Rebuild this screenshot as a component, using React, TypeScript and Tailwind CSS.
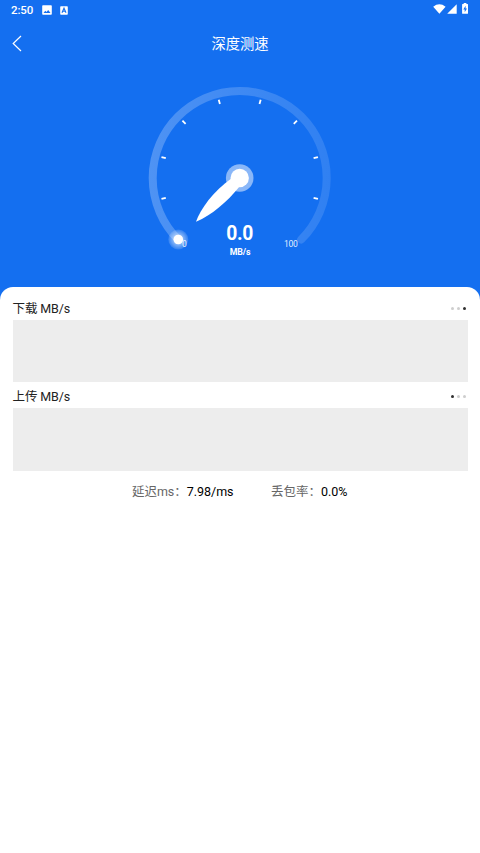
import React from "react";

const TICKS = [165, 195, 225, 255, 285, 315, 345, 375];

function StatusBar() {
  return (
    <div className="flex h-5 items-center justify-between pl-[11px] pr-[11px]">
      <div className="flex items-center">
        <span className="w-[31px] text-[11.5px] leading-5 font-medium tracking-[-0.1px]">2:50</span>
        <svg className="block" width="10" height="10" viewBox="0 0 10 10">
          <path fillRule="evenodd" fill="#fff" d="M1 .3h8a.8.8 0 0 1 .8.8v7.8a.8.8 0 0 1-.8.8H1a.8.8 0 0 1-.8-.8V1.100A.8.8 0 0 1 1 .3ZM1.500 8h7L6.200 5 4.500 7.100 3.300 5.800Z" />
        </svg>
        <svg className="ml-2 block" width="8" height="9" viewBox="0 0 8 9">
          <rect x=".2" y=".3" width="7.600" height="8.400" rx=".8" fill="#fff" />
          <path d="M2 6.800 4 2.200 6 6.800M2.800 5.300h2.400" fill="none" stroke="#146ff0" strokeWidth="1.100" />
        </svg>
      </div>
      <svg className="-mt-0.5 block" width="36" height="12" viewBox="433 3 36 12">
        <path fill="#fff" d="M433.200 6.700Q439.400 1.800 445.600 6.700L439.400 13.800ZM447.200 13.700 456.700 4.300V13.700ZM463.700 4v-.9h2.700V4h1.100q.5 0 .5.500v8.700q0 .6-.6.600h-4.700q-.6 0-.6-.6V4.500q0-.5.500-.5Z" />
        <path fill="#146ff0" d="M465.600 5.700 463.300 9.500H464.700V12.200L467 8.400H465.600Z" />
      </svg>
    </div>
  );
}

function Gauge() {
  return (
    <svg className="mx-auto block" width="200" height="190" viewBox="140 80 200 190">
      <defs>
        <linearGradient id="track" x1="149" x2="331" y1="0" y2="0" gradientUnits="userSpaceOnUse">
          <stop offset="0" stopColor="#fff" stopOpacity=".25" />
          <stop offset="1" stopColor="#fff" stopOpacity=".12" />
        </linearGradient>
        <radialGradient id="glow">
          <stop offset=".4" stopColor="#fff" stopOpacity=".55" />
          <stop offset="1" stopColor="#fff" stopOpacity=".12" />
        </radialGradient>
      </defs>
      <path d="M178.200 239.500A87 87 0 1 1 301.200 239.500" fill="none" stroke="url(#track)" strokeWidth="8" strokeLinecap="round" />
      {TICKS.map((angle) => (
        <line key={angle} x1="76.500" x2="81" y1="0" y2="0" stroke="#fff" strokeWidth="1.800" transform={`translate(239.700 178) rotate(${angle})`} />
      ))}
      <circle cx="239.700" cy="178" r="13.800" fill="#fff" fillOpacity=".5" />
      <path d="M196 221.800C200 210 213 191 232 178L240 186C227 202 212 215 196 221.800Z" fill="#fff" />
      <circle cx="239.700" cy="178" r="9.200" fill="#fff" />
      <circle cx="178.300" cy="239.500" r="10" fill="url(#glow)" />
      <circle cx="178.300" cy="239.500" r="4.800" fill="#fff" />
      <text x="182" y="246.700" fill="#fff" fillOpacity=".9" fontSize="8.500">0</text>
      <text x="284" y="246.700" fill="#fff" fillOpacity=".9" fontSize="8.500" letterSpacing="-.3">100</text>
      <text x="239.700" y="240.300" fill="#fff" fontSize="19.300" fontWeight="700" letterSpacing="-.3" textAnchor="middle">0.0</text>
      <text x="240" y="254.700" fill="#fff" fontSize="8.800" fontWeight="700" letterSpacing="-.15" textAnchor="middle">MB/s</text>
    </svg>
  );
}

function Dots({ active }: { active: number }) {
  return (
    <div className="flex gap-[3px] pr-0.5">
      {[0, 1, 2].map((i) => (
        <span key={i} className={`size-[3px] rounded-full ${i === active ? "bg-[#303030]" : "bg-[#cecece]"}`} />
      ))}
    </div>
  );
}

function SpeedPanel({ title, active, chart }: { title: string; active: number; chart: string }) {
  return (
    <section>
      <div className="flex h-[26px] items-center justify-between pt-[3px] text-[12.5px] tracking-[-0.1px] text-[#222]">
        <h2 className="pt-[2px]">{title}</h2>
        <Dots active={active} />
      </div>
      <div className={`bg-[#ededed] ${chart}`} />
    </section>
  );
}

export default function App() {
  return (
    <div className="flex h-[853px] w-[480px] flex-col overflow-hidden bg-[#146ff0] font-[Roboto,'Noto_Sans_CJK_SC',sans-serif]">
      <header className="h-[287px] text-white">
        <StatusBar />
        <div className="grid h-[47px] grid-cols-[40px_1fr_40px] items-center">
          <svg className="ml-[12px] block" width="10" height="18" viewBox="0 0 10 18">
            <path d="M9 1 1.200 8.500 9 16" fill="none" stroke="#fff" strokeWidth="1.200" />
          </svg>
          <h1 className="text-center text-[14.300px] leading-5">深度测速</h1>
        </div>
        <div className="pt-[13px]">
          <Gauge />
        </div>
      </header>
      <main className="flex-1 rounded-t-[13px] bg-white px-[12.500px] pt-[7px]">
        <SpeedPanel title="下载 MB/s" active={2} chart="h-[62px]" />
        <SpeedPanel title="上传 MB/s" active={0} chart="h-[63px]" />
        <div className="flex pl-[119.500px] pt-[11px] text-[12.500px] leading-5 tracking-[-0.03px] text-black">
          <div className="w-[139px]"><span className="text-[#666]">延迟ms：</span>7.98/ms</div>
          <div><span className="text-[#666]">丢包率：</span>0.0%</div>
        </div>
      </main>
    </div>
  );
}
